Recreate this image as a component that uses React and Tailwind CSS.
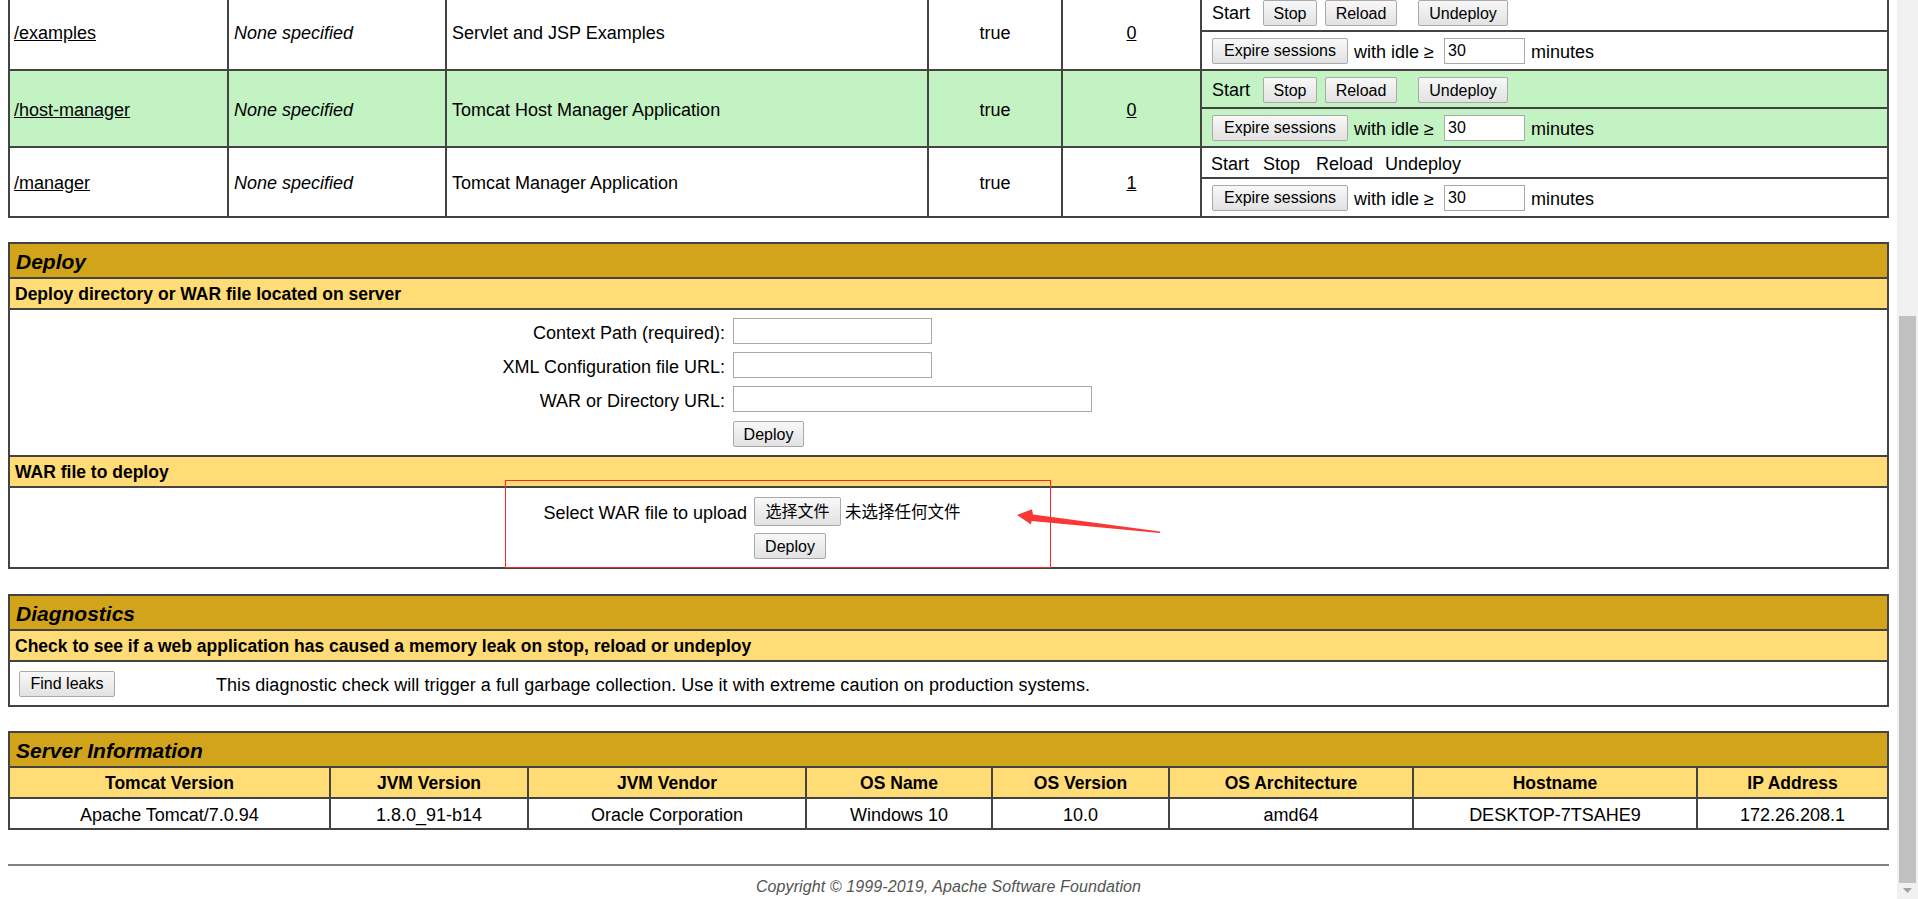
import React, { Fragment } from "react";

const LINE = "bg-[#434343]";

function Btn({ children, className = "" }) {
  return (
    <button
      type="button"
      className={`inline-flex items-center justify-center h-[26px] px-[10px] pt-[1px] border border-[#a9a9a9] rounded-[2px] bg-linear-to-b from-[#f8f8f8] to-[#e2e2e2] text-[16px] leading-none text-black whitespace-nowrap ${className}`}
    >
      {children}
    </button>
  );
}

function TextInput({ w, value = "" }) {
  return (
    <input
      readOnly
      defaultValue={value}
      className={`${w} h-[26px] border border-[#a9a9a9] bg-white px-[3px] pt-[1px] text-[16px] leading-none text-black outline-none`}
    />
  );
}

const apps = [
  { path: "/examples", name: "Servlet and JSP Examples", sessions: "0", bg: "bg-white", manager: false, rows: "grid-rows-[36px_37px]" },
  { path: "/host-manager", name: "Tomcat Host Manager Application", sessions: "0", bg: "bg-[#C3F3C3]", manager: false, rows: "grid-rows-[36px_37px]" },
  { path: "/manager", name: "Tomcat Manager Application", sessions: "1", bg: "bg-white", manager: true, rows: "grid-rows-[29px_37px]" },
];

function ExpireRow({ bg }) {
  return (
    <div className={`${bg} flex items-center pl-[10px]`}>
      <Btn className="w-[136px]">Expire sessions</Btn>
      <span className="w-[96px] pl-[6px] pt-[2px] whitespace-nowrap">with idle ≥</span>
      <TextInput w="w-[81px]" value="30" />
      <span className="pl-[6px] pt-[2px]">minutes</span>
    </div>
  );
}

function AppsTable() {
  return (
    <div className={`grid grid-cols-[217px_216px_480px_132px_137px_1fr] grid-rows-[75px_75px_68px] gap-[2px] ${LINE} p-[2px]`}>
      {apps.map((a) => (
        <Fragment key={a.path}>
          <div className={`${a.bg} flex items-center pl-[4px] pt-[2px]`}>
            <a className="underline text-black">{a.path}</a>
          </div>
          <div className={`${a.bg} flex items-center pl-[5px] pt-[2px] italic`}>None specified</div>
          <div className={`${a.bg} flex items-center pl-[5px] pt-[2px]`}>{a.name}</div>
          <div className={`${a.bg} flex items-center justify-center pt-[2px]`}>true</div>
          <div className={`${a.bg} flex items-center justify-center pt-[2px]`}>
            <a className="underline text-black">{a.sessions}</a>
          </div>
          <div className={`grid ${a.rows} gap-[2px]`}>
            {a.manager ? (
              <div className={`${a.bg} flex items-center pl-[9px] pt-[2px] whitespace-nowrap`}>
                <span className="w-[52px]">Start</span>
                <span className="w-[53px]">Stop</span>
                <span className="w-[69px]">Reload</span>
                <span>Undeploy</span>
              </div>
            ) : (
              <div className={`${a.bg} flex items-center pl-[10px] pt-[2px] whitespace-nowrap`}>
                <span className="w-[51px]">Start</span>
                <Btn className="w-[54px]">Stop</Btn>
                <Btn className="w-[72px] ml-[8px]">Reload</Btn>
                <Btn className="w-[90px] ml-[21px]">Undeploy</Btn>
              </div>
            )}
            <ExpireRow bg={a.bg} />
          </div>
        </Fragment>
      ))}
    </div>
  );
}

function Title({ children }) {
  return (
    <div className="h-[33px] bg-[#D2A41C] flex items-center pl-[6px] pt-[2px] text-[21px] font-bold italic">
      {children}
    </div>
  );
}

function SubHeader({ children }) {
  return (
    <div className="h-[29px] bg-[#FFDC75] flex items-center pl-[5px] pt-[2px] text-[17.5px] font-bold whitespace-nowrap">
      {children}
    </div>
  );
}

function DeploySection() {
  return (
    <div className={`mt-[24px] flex flex-col gap-[2px] ${LINE} p-[2px]`}>
      <Title>Deploy</Title>
      <SubHeader>Deploy directory or WAR file located on server</SubHeader>
      <div className="h-[145px] bg-white pt-[8px]">
        <div className="grid grid-cols-[723px_auto] gap-y-[8px] items-center justify-start">
          <div className="text-right pr-[8px] pt-[3px]">Context Path (required):</div>
          <TextInput w="w-[199px]" />
          <div className="text-right pr-[8px] pt-[3px]">XML Configuration file URL:</div>
          <TextInput w="w-[199px]" />
          <div className="text-right pr-[8px] pt-[3px]">WAR or Directory URL:</div>
          <TextInput w="w-[359px]" />
          <div />
          <div className="mt-[1px]">
            <Btn className="w-[71px]">Deploy</Btn>
          </div>
        </div>
      </div>
      <SubHeader>WAR file to deploy</SubHeader>
      <div className="h-[79px] bg-white pt-[9px]">
        <div className="grid grid-cols-[744px_auto] gap-y-[7px] items-center justify-start">
          <div className="text-right pr-[7px] pt-[3px]">Select WAR file to upload</div>
          <div className="flex items-center">
            <Btn className="w-[87px] h-[29px]">选择文件</Btn>
            <span className="pl-[4px] pt-[1px] text-[16.5px]">未选择任何文件</span>
          </div>
          <div />
          <div>
            <Btn className="w-[72px]">Deploy</Btn>
          </div>
        </div>
      </div>
    </div>
  );
}

function DiagnosticsSection() {
  return (
    <div className={`mt-[25px] flex flex-col gap-[2px] ${LINE} p-[2px]`}>
      <Title>Diagnostics</Title>
      <SubHeader>Check to see if a web application has caused a memory leak on stop, reload or undeploy</SubHeader>
      <div className="h-[43px] bg-white flex items-center">
        <div className="w-[206px] pl-[9px]">
          <Btn className="w-[96px]">Find leaks</Btn>
        </div>
        <span className="pt-[3px] tracking-[0.05px]">
          This diagnostic check will trigger a full garbage collection. Use it with extreme caution on production systems.
        </span>
      </div>
    </div>
  );
}

const info = [
  ["Tomcat Version", "Apache Tomcat/7.0.94"],
  ["JVM Version", "1.8.0_91-b14"],
  ["JVM Vendor", "Oracle Corporation"],
  ["OS Name", "Windows 10"],
  ["OS Version", "10.0"],
  ["OS Architecture", "amd64"],
  ["Hostname", "DESKTOP-7TSAHE9"],
  ["IP Address", "172.26.208.1"],
];

function ServerSection() {
  return (
    <div className={`mt-[24px] grid grid-cols-[319px_196px_276px_184px_175px_242px_282px_1fr] grid-rows-[33px_29px_29px] gap-[2px] ${LINE} p-[2px]`}>
      <div className="col-span-8 bg-[#D2A41C] flex items-center pl-[6px] pt-[2px] text-[21px] font-bold italic">
        Server Information
      </div>
      {info.map(([h]) => (
        <div key={h} className="bg-[#FFDC75] flex items-center justify-center pt-[3px] text-[17.5px] font-bold whitespace-nowrap">
          {h}
        </div>
      ))}
      {info.map(([h, v]) => (
        <div key={h + "v"} className="bg-white flex items-center justify-center pt-[3px] whitespace-nowrap">
          {v}
        </div>
      ))}
    </div>
  );
}

export default function App() {
  return (
    <div className="relative flex h-[899px] w-full overflow-hidden bg-white text-black text-[18px] leading-none font-['Liberation_Sans','Noto_Sans_CJK_SC',Arial,sans-serif]">
      <div className="w-[1897px] shrink-0 px-[8px]">
        <div className="-mt-[8px]">
          <AppsTable />
          <DeploySection />
          <DiagnosticsSection />
          <ServerSection />
          <div className="mt-[34px] h-[2px] bg-[#808080]" />
          <div className="mt-[12px] text-center text-[16px] leading-[18px] italic text-[#535353] tracking-[0.1px]">
            Copyright © 1999-2019, Apache Software Foundation
          </div>
        </div>
      </div>
      <div className="w-[21px] shrink-0 bg-[#f1f1f1] flex flex-col items-center pt-[316px]">
        <div className="w-[17px] h-[567px] bg-[#c1c1c1]" />
        <svg width="9" height="6" viewBox="0 0 9 6" className="mt-[5px]">
          <path d="M0 0 L9 0 L4.5 5 Z" fill="#a3a3a3" />
        </svg>
      </div>

      <div className="absolute left-[505px] top-[480px] w-[546px] h-[88px] border border-[#ff2424] pointer-events-none" />
      <svg
        className="absolute left-[1010px] top-[505px] pointer-events-none"
        width="155"
        height="32"
        viewBox="0 0 155 32"
      >
        <path
          d="M7 10 L22 4.2 L23 9.4 L150 26.4 L150 27.9 L21.6 16 L21 19.6 Z"
          fill="#fa3737"
        />
      </svg>
    </div>
  );
}
